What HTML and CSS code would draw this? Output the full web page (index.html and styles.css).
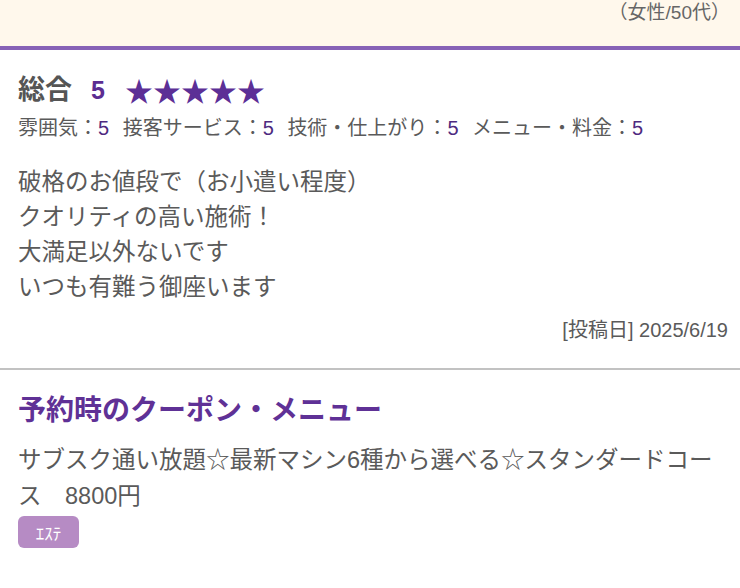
FILE: index.html
```html
<!DOCTYPE html>
<html lang="ja">
<head>
<meta charset="utf-8">
<link rel="stylesheet" href="styles.css">
</head>
<body>
<div class="top">
  <span class="reviewer">（女性/50代）</span>
</div>
<section class="review">
  <div class="overall">
    <span class="overall-label">総合</span>
    <span class="overall-score">5</span>
    <span class="stars">★★★★★</span>
  </div>
  <div class="ratings">
    <span class="rating">雰囲気：<span class="num">5</span></span>
    <span class="rating">接客サービス：<span class="num">5</span></span>
    <span class="rating">技術・仕上がり：<span class="num">5</span></span>
    <span class="rating">メニュー・料金：<span class="num">5</span></span>
  </div>
  <p class="body">破格のお値段で（お小遣い程度）<br>クオリティの高い施術！<br>大満足以外ないです<br>いつも有難う御座います</p>
  <div class="date">[投稿日] 2025/6/19</div>
</section>
<section class="coupon">
  <h2 class="coupon-title">予約時のクーポン・メニュー</h2>
  <p class="coupon-text">サブスク通い放題☆最新マシン6種から選べる☆スタンダードコース　8800円</p>
  <span class="badge">ｴｽﾃ</span>
</section>
</body>
</html>
```

FILE: styles.css
```css
* { box-sizing: border-box; }
html, body { margin: 0; padding: 0; background: #ffffff; }
body {
  font-family: "Liberation Sans", "Noto Sans CJK JP", sans-serif;
  color: #5a5a5a;
  width: 740px;
}
.top {
  height: 50px;
  background: #fff8ec;
  border-bottom: 4px solid #8762b6;
  text-align: right;
  padding-right: 10px;
  padding-top: 1px;
  font-size: 19px;
  line-height: 24px;
  color: #666;
}
.review {
  padding: 22px 12px 26px 18px;
  border-bottom: 2px solid #c2c2c2;
}
.overall {
  display: flex;
  align-items: center;
  height: 36px;
  line-height: 36px;
}
.overall-label {
  font-size: 27px;
  font-weight: bold;
  color: #555;
}
.overall-score {
  font-size: 25px;
  font-weight: bold;
  color: #5c2d91;
  margin-left: 19px;
}
.stars {
  font-family: "Noto Sans CJK JP", sans-serif;
  font-size: 28px;
  color: #5c2f96;
  margin-left: 20px;
}
.ratings {
  margin-top: 8px;
  font-size: 20px;
  line-height: 24px;
  white-space: nowrap;
}
.rating { margin-right: 8px; }
.num { color: #4e2a7f; }
.body {
  margin: 25px 0 0;
  font-size: 23.5px;
  line-height: 35px;
}
.date {
  margin-top: 13px;
  text-align: right;
  font-size: 20px;
  line-height: 24px;
}
.coupon {
  padding: 23px 12px 0 18px;
}
.coupon-title {
  margin: 0;
  font-size: 28px;
  line-height: 36px;
  font-weight: bold;
  color: #5f3196;
}
.coupon-text {
  margin: 13px 0 0;
  font-size: 23.5px;
  line-height: 36px;
}
.badge {
  display: inline-flex;
  align-items: center;
  justify-content: center;
  margin-top: 2px;
  width: 61px;
  height: 32px;
  border-radius: 6px;
  background: #b68bc4;
  color: #fff;
  font-size: 17px;
}
```
